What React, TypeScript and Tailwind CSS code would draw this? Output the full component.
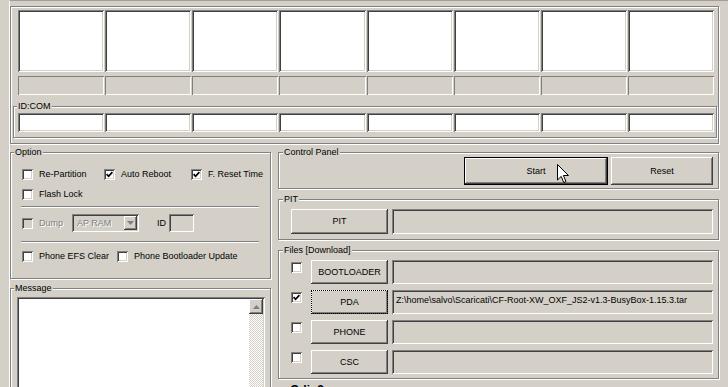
import React from "react";

const sunken =
  "shadow-[inset_1px_1px_0_#808080,inset_-1px_-1px_0_#fff,inset_2px_2px_0_#404040,inset_-2px_-2px_0_#d4d0c8]";
const raised =
  "shadow-[inset_-1px_-1px_0_#404040,inset_1px_1px_0_#fff,inset_-2px_-2px_0_#808080,inset_2px_2px_0_#d4d0c8]";

const Group = ({
  label,
  left = "left-[3px]",
  className = "",
  children,
}: {
  label?: string;
  left?: string;
  className?: string;
  children?: React.ReactNode;
}) => (
  <div
    className={`relative border border-[#808080] shadow-[inset_1px_1px_0_#fff,1px_1px_0_#fff] ${className}`}
  >
    {label && (
      <span className={`absolute ${left} top-[-6px] bg-[#d4d0c8] px-px leading-[11px]`}>
        {label}
      </span>
    )}
    {children}
  </div>
);

const Check = ({
  checked = false,
  disabled = false,
  className = "",
}: {
  checked?: boolean;
  disabled?: boolean;
  className?: string;
}) => (
  <span
    className={`relative inline-block h-[11px] w-[11px] shrink-0 ${
      disabled ? "bg-[#d4d0c8]" : "bg-white"
    } ${sunken} ${className}`}
  >
    {checked && (
      <svg className="absolute left-[2px] top-[2px]" width="7" height="7" viewBox="0 0 7 7">
        <path d="M0.6 3.2 L2.6 5.3 L6.4 1.2" stroke="#000" strokeWidth="1.7" fill="none" />
      </svg>
    )}
  </span>
);

const Option = ({
  label,
  checked,
  disabled,
  width,
}: {
  label: string;
  checked?: boolean;
  disabled?: boolean;
  width: string;
}) => (
  <div className={`flex items-center gap-[6px] ${width}`}>
    <Check checked={checked} disabled={disabled} />
    <span
      className={
        disabled ? "text-[#808080] [text-shadow:1px_1px_0_#fff]" : "whitespace-nowrap"
      }
    >
      {label}
    </span>
  </div>
);

const Separator = () => (
  <div className="-ml-px w-[238px] border-t border-b border-t-[#808080] border-b-white" />
);

const Button = ({
  label,
  className = "",
}: {
  label: string;
  className?: string;
}) => (
  <div className={`flex items-center justify-center bg-[#d4d0c8] ${raised} ${className}`}>
    {label}
  </div>
);

const FileRow = ({
  label,
  checked,
  focused,
  path,
}: {
  label: string;
  checked?: boolean;
  focused?: boolean;
  path?: string;
}) => (
  <div className="flex h-[24px] items-start">
    <Check checked={checked} className="mr-[9px] mt-[2px]" />
    <Button
      label={label}
      className={`h-[24px] w-[77px] ${
        focused ? "outline outline-1 outline-dotted outline-black -outline-offset-1" : ""
      }`}
    />
    <div className={`ml-[4px] h-[24px] w-[321px] whitespace-nowrap pl-[4px] pt-[6px] ${sunken}`}>
      {path}
    </div>
  </div>
);

const cols = [0, 1, 2, 3, 4, 5, 6, 7];

export default function App() {
  return (
    <div className="relative h-[387px] w-[728px] overflow-hidden bg-[#d4d0c8] font-['Liberation_Sans',Arial,sans-serif] text-[9px] leading-none text-black">
      <div className="ml-[9px] h-full border-l border-t border-l-white border-t-[#a29e96] pt-[5px]">
        {/* device slots */}
        <Group className="w-[709px] pb-[5px] pl-px pt-[3px]">
          <div className="ml-[6px] grid w-[696px] grid-cols-8 gap-x-px">
            {cols.map((i) => (
              <div key={i} className={`h-[62px] bg-white ${sunken}`} />
            ))}
          </div>
          <div className="ml-[6px] mt-[4px] grid w-[696px] grid-cols-8 gap-x-px">
            {cols.map((i) => (
              <div
                key={i}
                className="h-[19px] shadow-[inset_1px_1px_0_#808080,inset_-1px_-1px_0_#fff]"
              />
            ))}
          </div>
          <Group label="ID:COM" className="ml-px mt-[11px] w-[704px] pb-[5px] pl-[4px] pt-[6px]">
            <div className="grid w-[696px] grid-cols-8 gap-x-px">
              {cols.map((i) => (
                <div key={i} className={`h-[19px] bg-white ${sunken}`} />
              ))}
            </div>
          </Group>
        </Group>

        <div className="mt-[8px] flex gap-[7px]">
          {/* left column */}
          <div className="w-[261px]">
            <Group label="Option" className="h-[127px] pl-[11px] pt-[16px]">
              <div className="flex h-[11px] items-center">
                <Option label="Re-Partition" width="w-[82px]" />
                <Option label="Auto Reboot" checked width="w-[87px]" />
                <Option label="F. Reset Time" checked width="w-[70px]" />
              </div>
              <div className="mt-[9px] flex h-[11px] items-center">
                <Option label="Flash Lock" width="w-[82px]" />
              </div>
              <div className="mt-[6px]">
                <Separator />
              </div>
              <div className="mt-[6px] flex h-[18px] items-center">
                <Option label="Dump" disabled width="w-[50px]" />
                <div
                  className={`flex h-[18px] w-[67px] items-center justify-between pl-[5px] pr-[2px] ${sunken}`}
                >
                  <span className="text-[#808080] [text-shadow:1px_1px_0_#fff]">AP RAM</span>
                  <div className={`flex h-[14px] w-[13px] items-center justify-center ${raised}`}>
                    <svg width="7" height="4" viewBox="0 0 7 4">
                      <path d="M0 0 H7 L3.5 4 Z" fill="#808080" />
                    </svg>
                  </div>
                </div>
                <span className="ml-[18px]">ID</span>
                <div className={`ml-[3px] h-[18px] w-[25px] ${sunken}`} />
              </div>
              <div className="mt-[9px]">
                <Separator />
              </div>
              <div className="mt-[8px] flex h-[11px] items-center">
                <Option label="Phone EFS Clear" width="w-[95px]" />
                <Option label="Phone Bootloader Update" width="w-[130px]" />
              </div>
            </Group>

            <Group label="Message" className="mt-[9px] h-[120px] pl-[6px] pt-[8px]">
              <div className={`flex h-[110px] w-[248px] justify-end bg-white p-[2px] ${sunken}`}>
                <div className="h-full w-[14px] bg-[repeating-conic-gradient(#fff_0_25%,#d4d0c8_0_50%)] bg-[length:2px_2px]">
                  <div className={`flex h-[15px] items-center justify-center bg-[#d4d0c8] ${raised}`}>
                    <svg width="7" height="4" viewBox="0 0 7 4">
                      <path d="M0 4 H7 L3.5 0 Z" fill="#808080" />
                    </svg>
                  </div>
                </div>
              </div>
            </Group>
          </div>

          {/* right column */}
          <div className="w-[441px]">
            <Group
              label="Control Panel"
              left="left-[4px]"
              className="flex h-[37px] justify-end gap-[3px] pr-[5px] pt-[4px]"
            >
              <div className="h-[28px] w-[144px] border border-black">
                <Button label="Start" className="h-full w-full" />
              </div>
              <Button label="Reset" className="h-[28px] w-[102px]" />
            </Group>

            <Group label="PIT" left="left-[4px]" className="mt-[10px] pb-[5px] pl-[12px] pt-[9px]">
              <div className="flex">
                <Button label="PIT" className="h-[25px] w-[97px]" />
                <div className={`ml-[4px] h-[25px] w-[321px] ${sunken}`} />
              </div>
            </Group>

            <Group
              label="Files [Download]"
              left="left-[4px]"
              className="mt-[10px] flex flex-col gap-[6px] pb-[4px] pl-[12px] pt-[9px]"
            >
              <FileRow label="BOOTLOADER" />
              <FileRow
                label="PDA"
                checked
                focused
                path="Z:\home\salvo\Scaricati\CF-Root-XW_OXF_JS2-v1.3-BusyBox-1.15.3.tar"
              />
              <FileRow label="PHONE" />
              <FileRow label="CSC" />
            </Group>
            <div className="mt-[5px] pl-[12px] text-[12px] font-bold">Odin3</div>
          </div>
        </div>
      </div>

      {/* mouse pointer over Start */}
      <svg className="absolute left-[557px] top-[164px]" width="13" height="20" viewBox="0 0 13 20">
        <path
          d="M0.5 0.5 L0.5 16 L4.2 12.4 L6.8 18.6 L9 17.6 L6.4 11.5 L11.5 11.5 Z"
          fill="#fff"
          stroke="#000"
          strokeWidth="1"
        />
      </svg>
    </div>
  );
}
